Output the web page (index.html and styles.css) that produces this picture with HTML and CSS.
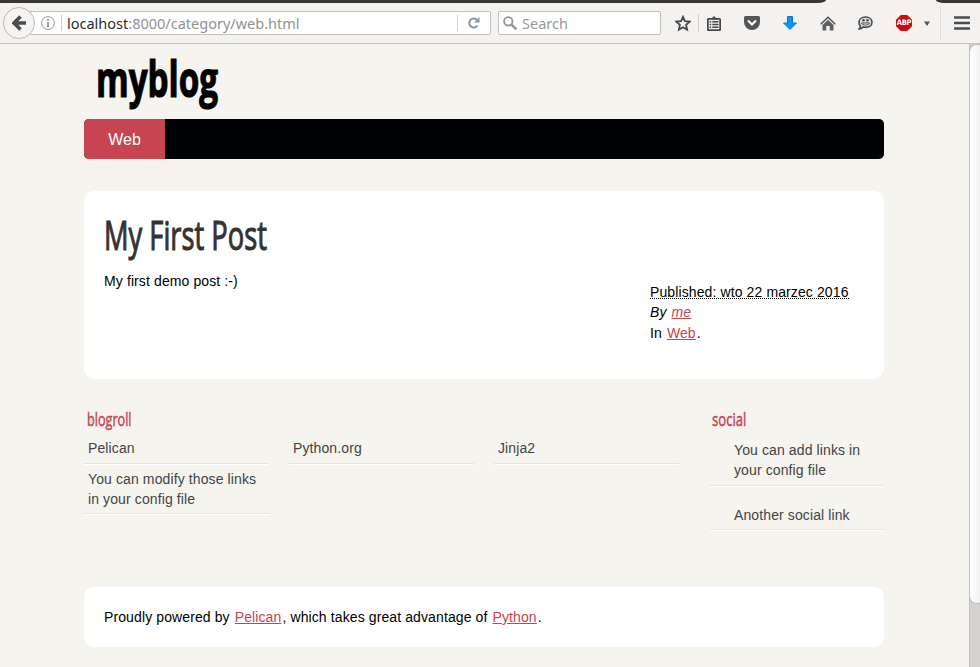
FILE: index.html
```html
<!DOCTYPE html>
<html lang="en">
<head>
<meta charset="utf-8">
<title>myblog</title>
<link rel="stylesheet" href="styles.css">
</head>
<body>
<header class="chrome">
  <div class="tabstrip"><span class="tab-left"></span><span class="tab-right"></span></div>
  <div class="toolbar">
    <div class="back"><svg width="14" height="16" viewBox="0 0 14 16"><path d="M8.500 1.500 2 8l6.500 6.500M2.500 8H14" fill="none" stroke="#4b4b4b" stroke-width="3.600"/></svg></div>
    <div class="urlbar">
      <svg class="info" width="14" height="14" viewBox="0 0 14 14"><circle cx="7" cy="7" r="6.400" fill="none" stroke="#949494"/><path d="M7 3v1.800M7 6v5" stroke="#8a8a8a" stroke-width="1.700"/></svg>
      <span class="url"><b>localhost</b>:8000/category/web.html</span>
      <span class="reload"><svg width="12" height="12" viewBox="0 0 12 12"><path d="M9.500 8.500A4.500 4.500 0 1 1 9 2.800" fill="none" stroke="#8796a5" stroke-width="2"/><path d="M11.500 0v5.500H6z" fill="#8796a5"/></svg></span>
    </div>
    <div class="search"><svg width="14" height="14" viewBox="0 0 14 14"><circle cx="5.300" cy="5.300" r="4.200" fill="none" stroke="#959595" stroke-width="1.900"/><path d="m8.300 8.300 5 5" stroke="#959595" stroke-width="2.500"/></svg><span>Search</span></div>
    <div class="icons">
      <svg width="16" height="17" viewBox="0 0 16 17"><path d="m8 1.800 1.900 4.300 4.800.5-3.600 3.200 1 4.900L8 12.200l-4.100 2.500 1-4.900L1.300 6.600l4.800-.5z" fill="none" stroke="#484848" stroke-width="1.800"/></svg>
      <i class="sep"></i>
      <svg class="i-list" width="14" height="15" viewBox="0 0 14 15"><rect x=".8" y="2.800" width="12.400" height="11.400" rx="1" fill="#f3f2f0" stroke="#484848" stroke-width="1.800"/><path d="M3.500 3.500 7 0l3.500 3.500z" fill="#484848"/><path d="M2.600 5.700h1.600M5.300 5.700h6.200M2.600 8.500h1.600M5.300 8.500h6.200M2.600 11.300h1.600M5.300 11.300h6.200" stroke="#484848" stroke-width="1.400"/></svg>
      <svg class="i-pocket" width="16" height="14" viewBox="0 0 16 14"><path d="M1.500 0h13Q16 0 16 1.500V6A8 8 0 0 1 0 6V1.500Q0 0 1.500 0z" fill="#555"/><path d="m4 4.500 4 4 4-4" fill="none" stroke="#fff" stroke-width="2"/></svg>
      <svg class="i-down" width="14" height="14" viewBox="0 0 14 14"><path d="M4.500.5h5V7h4L7 13.500.5 7h4z" fill="#0996f8" stroke="#0878e4"/></svg>
      <svg class="i-home" width="16" height="15" viewBox="0 0 16 15"><path d="M8 3.800 13.500 9v5.500H9.700V10H6.300v4.500H2.500V9z" fill="#606060"/><path d="M.7 8.200 8 1.200l7.300 7" fill="none" stroke="#505050" stroke-width="1.500"/></svg>
      <svg class="i-chat" width="15" height="14" viewBox="0 0 15 14"><path d="M7.500 1C11.500 1 14 3.300 14 6.200s-2.500 5.100-6.500 5.100c-1 0-1.700-.1-2.500-.3-1 1.500-2.500 2-4 2 1-.8 1.400-1.700 1.300-3C1.400 9 1 7.800 1 6.200 1 3.300 3.500 1 7.500 1z" fill="#ddd" stroke="#484848" stroke-width="1.600"/><path d="M3.500 7C4.700 9.700 10.300 9.700 11.500 7z" fill="#fff" stroke="#484848"/><circle cx="5.500" cy="4.300" r="1.200" fill="#484848"/><circle cx="9.500" cy="4.300" r="1.200" fill="#484848"/></svg>
      <span class="abp">ABP</span>
      <svg class="i-caret" width="6" height="5" viewBox="0 0 6 5"><path d="M0 .5h6L3 5z" fill="#555"/></svg>
      <i class="sep tall"></i>
      <svg class="i-menu" width="16" height="14" viewBox="0 0 16 14"><path d="M1 1.500h14M1 7h14M1 12.500h14" stroke="#4c4c4c" stroke-width="2.600" stroke-linecap="round"/></svg>
    </div>
  </div>
</header>
<div class="view">
  <div class="page">
    <h1 class="brand"><span>myblog</span></h1>
    <nav class="menu"><a>Web</a></nav>
    <article class="post">
      <h2><span>My First Post</span></h2>
      <div class="post-body">
        <p>My first demo post :-)</p>
        <footer class="meta">
          <div><abbr>Published: wto 22 marzec 2016</abbr></div>
          <div><em>By <a class="link">me</a></em></div>
          <div>In <a class="link">Web</a>.</div>
        </footer>
      </div>
    </article>
    <section class="extras">
      <div class="blogroll">
        <h3><span>blogroll</span></h3>
        <ul><li>Pelican</li><li>Python.org</li><li>Jinja2</li><li>You can modify those links in your config file</li></ul>
      </div>
      <div class="social">
        <h3><span>social</span></h3>
        <ul><li>You can add links in your config file</li><li>Another social link</li></ul>
      </div>
    </section>
    <footer class="about">Proudly powered by <a class="link">Pelican</a>, which takes great advantage of <a class="link">Python</a>.</footer>
  </div>
  <div class="scrollbar"><div class="thumb"></div></div>
</div>
</body>
</html>
```

FILE: styles.css
```css
* { box-sizing: border-box; }
body { margin: 0; height: 667px; overflow: hidden; display: flex; flex-direction: column; background: #f5f4ef; color: #000; font: 14px/20px "Liberation Sans", sans-serif; }
h1, h2, h3, p, ul { margin: 0; padding: 0; }
ul { list-style: none; }
svg { display: block; flex: none; }

.chrome { height: 44px; flex: none; background: #f3f2f0; border-bottom: 1px solid #c8c7c2; }
.tabstrip { height: 3px; display: flex; justify-content: space-between; }
.tab-left { width: 826px; background: #393734; border-bottom-right-radius: 8px 3px; }
.tab-right { width: 44px; background: #393734; border-bottom-left-radius: 8px 3px; }
.toolbar { height: 40px; display: flex; align-items: center; padding-left: 3px; }
.back { width: 32px; height: 32px; flex: none; border: 1px solid #bcbbb7; border-radius: 50%; background: #f5f4f3; display: flex; align-items: center; padding-left: 8px; z-index: 1; }
.urlbar { width: 461px; height: 24px; margin-left: -5px; flex: none; background: #fff; border: 1px solid #c3c2be; border-radius: 0 2px 2px 0; display: flex; align-items: center; font-family: "Noto Sans", sans-serif; font-size: 14.500px; }
.info { margin-left: 10px; }
.url { margin-left: 6px; height: 16px; border-left: 1px solid #ccc; padding-left: 5px; line-height: 17px; color: #929292; white-space: nowrap; }
.url b { font-weight: 400; color: #2e2e2e; }
.reload { margin-left: auto; width: 33px; height: 16px; border-left: 1px solid #d3d3d3; display: flex; align-items: center; padding-left: 10px; }
.search { width: 163px; height: 24px; margin-left: 7px; flex: none; background: #fff; border: 1px solid #c3c2be; border-radius: 2px; display: flex; align-items: center; padding-left: 4px; gap: 5px; color: #999; font: 14.500px/20px "Noto Sans", sans-serif; }
.icons { display: flex; align-items: center; margin-left: 14px; }
.sep { width: 1px; height: 18px; margin-left: 7px; background: #d2d1cf; }
.i-list { margin-left: 8px; }
.i-pocket { margin-left: 23px; }
.i-down { margin-left: 23px; }
.i-home { margin-left: 23px; }
.i-chat { margin-left: 22px; }
.abp { margin-left: 23px; width: 16px; height: 16px; background: #c80b0b; clip-path: polygon(30% 0, 70% 0, 100% 30%, 100% 70%, 70% 100%, 30% 100%, 0 70%, 0 30%); color: #fff; font: bold 7.500px/16px "DejaVu Sans Condensed", "DejaVu Sans", sans-serif; letter-spacing: -.3px; text-align: center; }
.i-caret { margin-left: 12px; }
.sep.tall { height: 34px; margin-left: 10px; background: #e0dfdc; }
.i-menu { margin-left: 13px; }

.view { flex: 1; display: flex; justify-content: space-between; min-height: 0; }
.page { width: 800px; margin-left: 84px; letter-spacing: .11px; }
.brand, h2, h3 { font-family: "Open Sans", sans-serif; white-space: nowrap; letter-spacing: 0; }
.brand span, h2 span, h3 span { display: inline-block; transform-origin: 0 50%; }
.brand { height: 75px; padding: 0 0 0 12px; font-size: 50px; line-height: 69px; font-weight: 700; }
.brand span { transform: scaleX(.665); -webkit-text-stroke: 1.2px #000; }
.menu { height: 40px; background: #000205; border-radius: 5px; overflow: hidden; display: flex; }
.menu a { width: 81px; background: #c74451; color: #fff; font-size: 16px; line-height: 42px; text-align: center; letter-spacing: 0; }
.post { margin-top: 32px; height: 188px; padding: 20px; border-radius: 10px; background: #fff; }
h2 { height: 60px; font-size: 41px; line-height: 46px; font-weight: 400; color: #333; }
h2 span { transform: scaleX(.666); -webkit-text-stroke: 1.1px #333; }
.post-body { display: flex; justify-content: space-between; }
.meta { width: 214px; padding-top: 11px; line-height: 22px; }
.meta div:nth-child(-n+2) { height: 20px; line-height: 20px; }
abbr { border-bottom: 1px dotted #000; display: inline-block; line-height: 13px; height: 13px; text-decoration: none; }
.link { color: #c74451; text-decoration: underline; padding: 0 1px; }
.extras { height: 208px; padding-top: 29px; display: flex; justify-content: space-between; }
h3 { height: 26px; padding-left: 3px; font-size: 19px; line-height: 23px; font-weight: 400; color: #c74451; }
h3 span { transform: scaleX(.665); -webkit-text-stroke: .5px #c74451; }
.social h3 span { transform: scaleX(.69); }
.blogroll { width: 600px; }
.blogroll ul { display: grid; grid-template-columns: repeat(3, 185px); column-gap: 20px; }
li { color: #444; border-bottom: 1px solid #eee0e0; box-shadow: 0 1px #fff; }
.blogroll li { padding: 4px 4px 5px; }
.blogroll li:nth-child(n+4) { padding: 5px 4px 4px; }
.social { width: 175px; }
.social li { padding: 6px 20px 5px 25px; }
.social li + li { padding-top: 19px; padding-bottom: 4px; }
.about { height: 60px; padding: 20px; border-radius: 10px; background: #fff; }
.scrollbar { width: 11px; background: #d5d3d2; border-left: 1px solid #c1c0bc; overflow: hidden; }
.thumb { width: 14px; height: 558px; margin-top: 1px; border-radius: 7px; background: linear-gradient(90deg, #fff, #ededed); box-shadow: 0 0 0 1px #bfbebb; }
```
